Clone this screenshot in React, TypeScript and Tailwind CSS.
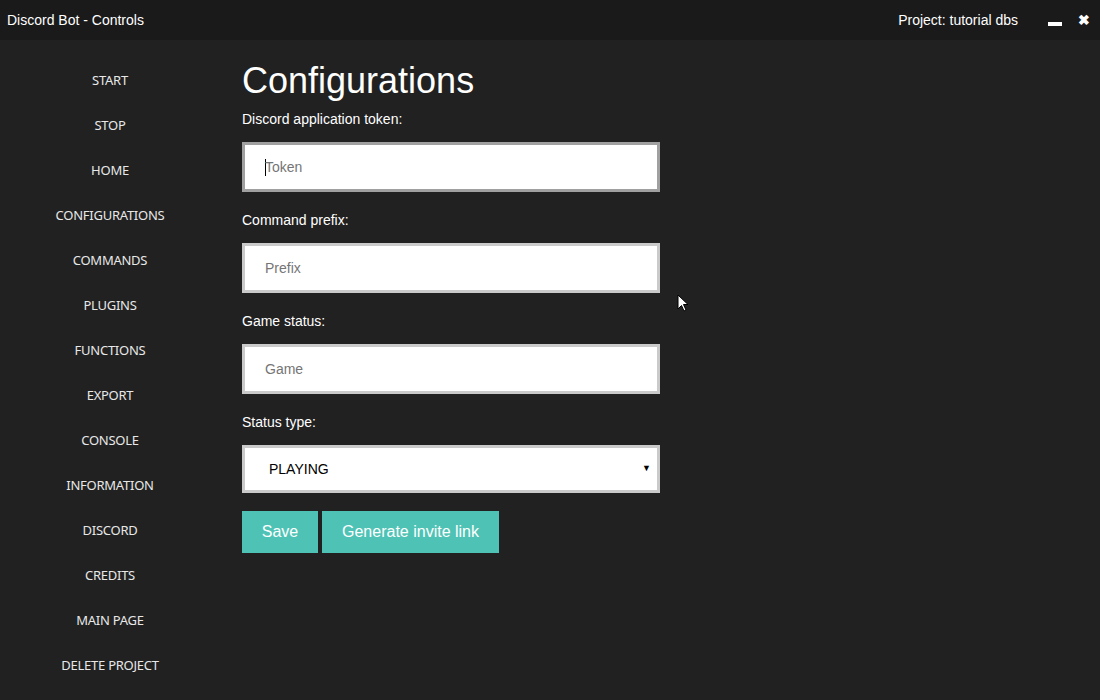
const navItems = [
  'START',
  'STOP',
  'HOME',
  'CONFIGURATIONS',
  'COMMANDS',
  'PLUGINS',
  'FUNCTIONS',
  'EXPORT',
  'CONSOLE',
  'INFORMATION',
  'DISCORD',
  'CREDITS',
  'MAIN PAGE',
  'DELETE PROJECT',
];

function Field({ label, placeholder, focused }: { label: string; placeholder: string; focused?: boolean }) {
  return (
    <div>
      <p className="text-[14px] leading-[16px] text-white">{label}</p>
      <div
        className={`mt-[15px] flex h-[50px] w-[418px] items-center border-[3px] bg-white pl-[20px] text-[14px] ${
          focused ? 'border-[#a0a0a0]' : 'border-[#cacaca]'
        }`}
      >
        {focused ? <span className="mr-[-1px] h-[17px] w-px bg-black" /> : null}
        <span className="text-[#757575]">{placeholder}</span>
      </div>
    </div>
  );
}

export default function App() {
  return (
    <div className="relative flex h-[700px] w-[1100px] flex-col bg-[#212121] font-['Liberation_Sans',Arial,sans-serif] text-white">
      <header className="flex h-[40px] shrink-0 items-center justify-between bg-[#1a1a1a] pl-[7px] pr-[10px] text-[14px]">
        <span>Discord Bot - Controls</span>
        <div className="flex items-center">
          <span className="mr-[2px]">Project: tutorial dbs</span>
          <span className="ml-[28px] mt-[7px] h-[4px] w-[14px] bg-white" />
          <span className="ml-[16px] text-[14px] font-bold leading-none">✖</span>
        </div>
      </header>

      <div className="flex flex-1">
        <nav className="flex w-[220px] flex-col items-center pt-[18px] font-['Noto_Sans','Open_Sans',sans-serif] text-[13px] tracking-[-0.25px] text-[#e8e8e8]">
          {navItems.map((item) => (
            <div key={item} className="flex h-[45px] items-center">
              {item}
            </div>
          ))}
        </nav>

        <main className="flex flex-col pl-[22px] pt-[21px]">
          <h1 className="text-[36px] leading-[40px]">Configurations</h1>
          <div className="mt-[10px] flex flex-col gap-[20px]">
            <Field label="Discord application token:" placeholder="Token" focused />
            <Field label="Command prefix:" placeholder="Prefix" />
            <Field label="Game status:" placeholder="Game" />
            <div>
              <p className="text-[14px] leading-[16px] text-white">Status type:</p>
              <div className="mt-[15px] flex h-[48px] w-[418px] items-center justify-between border-[3px] border-[#cacaca] bg-white pl-[24px] pr-[6px] text-[14px] text-black">
                <span>PLAYING</span>
                <span className="text-[9px]">▼</span>
              </div>
            </div>
          </div>
          <div className="mt-[18px] flex gap-[4px]">
            <button type="button" className="h-[42px] w-[76px] bg-[#4ec3b5] text-[16px] text-white">
              Save
            </button>
            <button type="button" className="h-[42px] w-[177px] bg-[#4ec3b5] text-[16px] text-white">
              Generate invite link
            </button>
          </div>
        </main>
      </div>

      <svg className="absolute left-[677px] top-[294px]" width="12" height="19" viewBox="0 0 12 19">
        <path d="M1 1 L1 15 L4.5 11.5 L7 17 L9 16 L6.5 10.5 L11 10.5 Z" fill="white" stroke="black" strokeWidth="1" />
      </svg>
    </div>
  );
}
